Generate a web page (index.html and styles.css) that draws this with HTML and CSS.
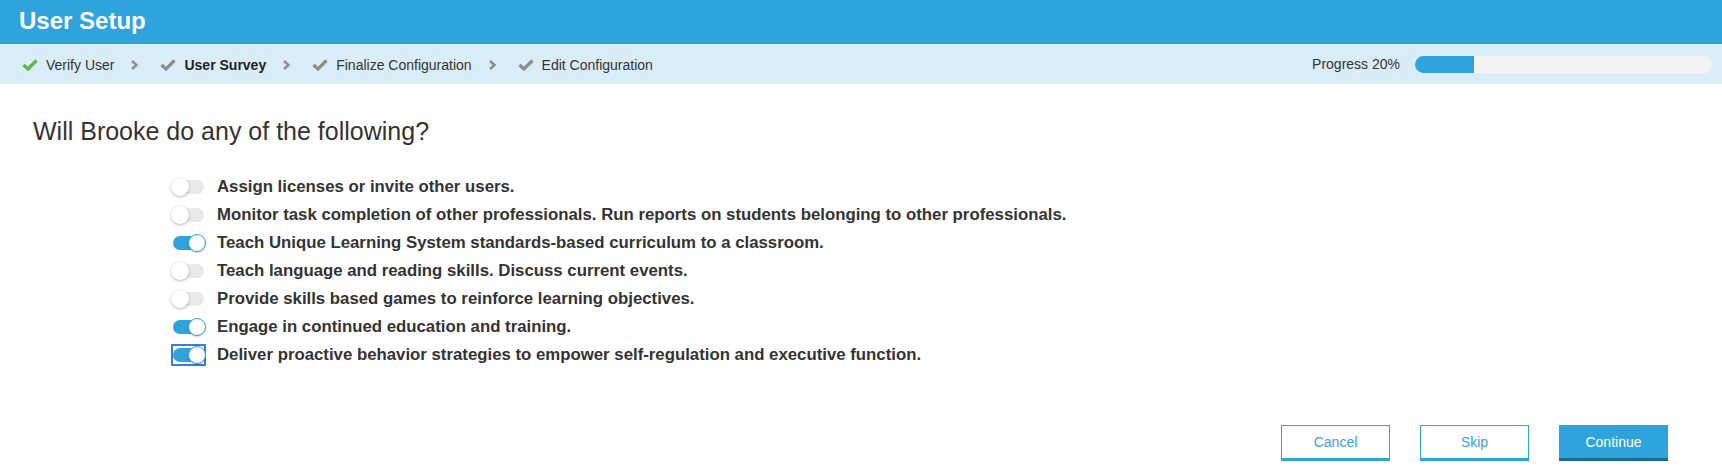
FILE: index.html
```html
<!DOCTYPE html>
<html lang="en">
<head>
<meta charset="utf-8">
<title>User Setup</title>
<link rel="stylesheet" href="styles.css">
</head>
<body>
<header class="topbar">User Setup</header>
<nav class="crumbbar">
  <ol class="steps">
    <li class="step done">
      <svg class="check" viewBox="0 0 16 12" width="16" height="12"><polyline points="1.5,6 6,10 14.5,1.5" fill="none" stroke="currentColor" stroke-width="3.2"/></svg>
      <span>Verify User</span>
    </li>
    <li class="sep"><svg viewBox="0 0 7 10" width="7" height="10"><polyline points="1,1 5.5,5 1,9" fill="none" stroke="currentColor" stroke-width="2.4"/></svg></li>
    <li class="step current">
      <svg class="check" viewBox="0 0 16 12" width="16" height="12"><polyline points="1.5,6 6,10 14.5,1.5" fill="none" stroke="currentColor" stroke-width="3.2"/></svg>
      <span>User Survey</span>
    </li>
    <li class="sep"><svg viewBox="0 0 7 10" width="7" height="10"><polyline points="1,1 5.5,5 1,9" fill="none" stroke="currentColor" stroke-width="2.4"/></svg></li>
    <li class="step">
      <svg class="check" viewBox="0 0 16 12" width="16" height="12"><polyline points="1.5,6 6,10 14.5,1.5" fill="none" stroke="currentColor" stroke-width="3.2"/></svg>
      <span>Finalize Configuration</span>
    </li>
    <li class="sep"><svg viewBox="0 0 7 10" width="7" height="10"><polyline points="1,1 5.5,5 1,9" fill="none" stroke="currentColor" stroke-width="2.4"/></svg></li>
    <li class="step">
      <svg class="check" viewBox="0 0 16 12" width="16" height="12"><polyline points="1.5,6 6,10 14.5,1.5" fill="none" stroke="currentColor" stroke-width="3.2"/></svg>
      <span>Edit Configuration</span>
    </li>
  </ol>
  <div class="progress">
    <span class="progress-label">Progress 20%</span>
    <div class="progress-track"><div class="progress-fill" style="width:20%"></div></div>
  </div>
</nav>
<main class="survey">
  <h2 class="question">Will Brooke do any of the following?</h2>
  <ul class="options">
    <li class="option"><span class="switch"><span class="toggle"><span class="knob"></span></span></span><span class="label">Assign licenses or invite other users.</span></li>
    <li class="option"><span class="switch"><span class="toggle"><span class="knob"></span></span></span><span class="label">Monitor task completion of other professionals. Run reports on students belonging to other professionals.</span></li>
    <li class="option"><span class="switch"><span class="toggle on"><span class="knob"></span></span></span><span class="label">Teach Unique Learning System standards-based curriculum to a classroom.</span></li>
    <li class="option"><span class="switch"><span class="toggle"><span class="knob"></span></span></span><span class="label">Teach language and reading skills. Discuss current events.</span></li>
    <li class="option"><span class="switch"><span class="toggle"><span class="knob"></span></span></span><span class="label">Provide skills based games to reinforce learning objectives.</span></li>
    <li class="option"><span class="switch"><span class="toggle on"><span class="knob"></span></span></span><span class="label">Engage in continued education and training.</span></li>
    <li class="option"><span class="switch focused"><span class="toggle on"><span class="knob"></span></span></span><span class="label">Deliver proactive behavior strategies to empower self-regulation and executive function.</span></li>
  </ul>
  <div class="actions">
    <button class="btn btn-outline">Cancel</button>
    <button class="btn btn-outline">Skip</button>
    <button class="btn btn-primary">Continue</button>
  </div>
</main>
</body>
</html>
```
FILE: styles.css
```css
html, body {
  margin: 0;
  padding: 0;
  background: #ffffff;
}
body {
  font-family: "Liberation Sans", Arial, sans-serif;
  color: #333333;
  width: 1722px;
  height: 471px;
  overflow: hidden;
}
.topbar {
  height: 44px;
  box-sizing: border-box;
  background: #2fa3dc;
  color: #ffffff;
  font-size: 24px;
  font-weight: bold;
  display: flex;
  align-items: center;
  padding: 0 0 3px 19px;
}
.crumbbar {
  height: 40px;
  background: #d9edf8;
  display: flex;
  align-items: center;
  justify-content: space-between;
  padding: 0 9px 0 22px;
}
.steps {
  list-style: none;
  margin: 0;
  padding: 0;
  display: flex;
  align-items: center;
  font-size: 14px;
  color: #333333;
  padding-top: 2px;
}
.step {
  display: flex;
  align-items: center;
  gap: 8px;
}
.step .check {
  color: #8c8c8c;
  display: block;
}
.step.done .check {
  color: #5cb548;
}
.step.current {
  font-weight: bold;
  color: #222222;
}
.sep {
  color: #8c8c8c;
  margin: 0 22px 0 17px;
  display: flex;
  align-items: center;
}
.sep svg {
  display: block;
}
.progress {
  display: flex;
  align-items: center;
  gap: 14px;
  font-size: 14px;
  color: #333333;
}
.progress-track {
  width: 299px;
  height: 19px;
  box-sizing: border-box;
  border-radius: 10px;
  background: #f3f3f3;
  border: 1px solid #e6eef3;
  overflow: hidden;
  display: flex;
}
.progress-fill {
  height: 100%;
  background: #2fa3dc;
}
.survey {
  padding: 32px 0 0 33px;
}
.question {
  margin: 0;
  font-size: 25px;
  font-weight: normal;
  line-height: 30px;
  color: #333333;
}
.options {
  list-style: none;
  margin: 27px 0 0 0;
  padding: 0 0 0 138px;
}
.option {
  display: flex;
  align-items: center;
  height: 28px;
  gap: 11px;
}
.label {
  font-size: 16.8px;
  font-weight: bold;
  color: #333333;
}
.switch {
  display: flex;
  align-items: center;
  justify-content: center;
  width: 35px;
  height: 22px;
  box-sizing: border-box;
  flex: none;
}
.switch.focused {
  border: 2px solid #3c78e6;
}
.toggle {
  position: relative;
  width: 31px;
  height: 14px;
  border-radius: 7px;
  background: #e8e8e8;
  flex: none;
}
.toggle .knob {
  position: absolute;
  top: -2px;
  left: -2px;
  width: 18px;
  height: 18px;
  box-sizing: border-box;
  border-radius: 50%;
  background: #ffffff;
  box-shadow: 0 1px 3px rgba(0, 0, 0, 0.3);
}
.toggle.on {
  background: #2fa3dc;
}
.toggle.on .knob {
  left: 15px;
  border: 1.5px solid #2fa3dc;
  box-shadow: 0 1px 2px rgba(0, 0, 0, 0.2);
}
.actions {
  display: flex;
  justify-content: flex-end;
  gap: 30px;
  padding-right: 54px;
  margin-top: 56px;
}
.btn {
  width: 109px;
  height: 36px;
  box-sizing: border-box;
  font-family: "Liberation Sans", Arial, sans-serif;
  font-size: 14px;
  cursor: pointer;
  padding: 0;
  border-radius: 0;
}
.btn-outline {
  background: #ffffff;
  color: #3aa1db;
  border: 1px solid #2fa3dc;
  border-bottom-width: 3px;
}
.btn-primary {
  background: #2fa3dc;
  color: #ffffff;
  border: none;
  border-bottom: 3px solid #1b6a93;
}
```
